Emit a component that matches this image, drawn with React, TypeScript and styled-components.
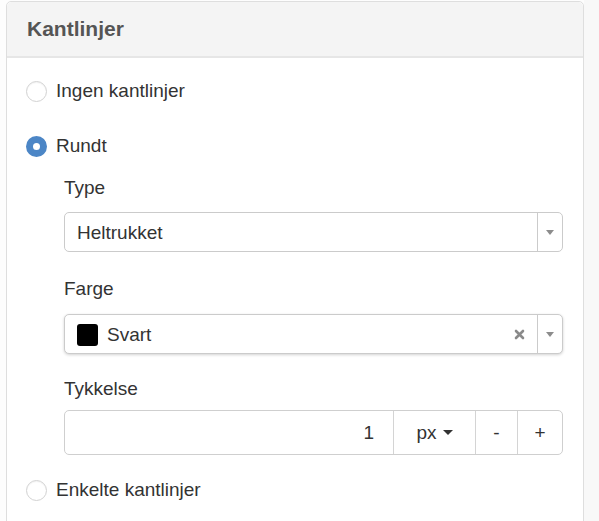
import React from "react";
import styled, { createGlobalStyle } from "styled-components";

const GlobalStyle = createGlobalStyle`
  html, body {
    margin: 0;
    padding: 0;
    background: #ffffff;
    font-family: "Liberation Sans", Arial, sans-serif;
    color: #333333;
  }
`;

const Page = styled.div`
  display: flex;
  height: 521px;
  overflow: hidden;
`;

const Column = styled.div`
  padding: 1px 0 0 6px;
  background: #fdfdfd;
`;

const Filler = styled.div`
  flex: 1;
  background: #f8f8f8;
`;

const Panel = styled.div`
  width: 576px;
  height: 560px;
  border: 1px solid #dedede;
  border-radius: 5px 5px 0 0;
  background: #ffffff;
`;

const PanelHeader = styled.div`
  height: 54px;
  display: flex;
  align-items: center;
  padding: 0 0 0 20px;
  background: #f4f4f4;
  border-bottom: 2px solid #e6e6e6;
  border-radius: 5px 5px 0 0;
`;

const Title = styled.h3`
  margin: 0;
  font-size: 21px;
  font-weight: 700;
  color: #555555;
`;

const PanelBody = styled.div`
  padding: 21px 20px 0 19px;
  display: flex;
  flex-direction: column;
`;

const RadioRow = styled.label<{ $top?: number }>`
  display: flex;
  align-items: center;
  gap: 9px;
  height: 24px;
  margin-top: ${(p) => p.$top ?? 0}px;
  font-size: 19px;
  line-height: 24px;
`;

const RadioDot = styled.span<{ $checked?: boolean }>`
  width: 21px;
  height: 21px;
  box-sizing: border-box;
  border-radius: 50%;
  flex-shrink: 0;
  background: #ffffff;
  border: ${(p) => (p.$checked ? "7px solid #4c86c6" : "1px solid #d2d2d2")};
  box-shadow: ${(p) => (p.$checked ? "none" : "inset 0 1px 1px rgba(0,0,0,0.05)")};
`;

const Nested = styled.div`
  padding-left: 38px;
  display: flex;
  flex-direction: column;
`;

const FieldLabel = styled.div<{ $top: number; $gap: number }>`
  font-size: 19px;
  line-height: 24px;
  margin-top: ${(p) => p.$top}px;
  margin-bottom: ${(p) => p.$gap}px;
`;

const Select = styled.div<{ $raised?: boolean }>`
  height: 40px;
  box-sizing: border-box;
  display: flex;
  align-items: stretch;
  border: 1px solid #cbcbcb;
  border-radius: 5px;
  background: #ffffff;
  box-shadow: ${(p) => (p.$raised ? "0 1px 3px rgba(0,0,0,0.18)" : "none")};
`;

const SelectValue = styled.div`
  flex: 1;
  display: flex;
  align-items: center;
  gap: 9px;
  padding: 2px 0 0 12px;
  font-size: 19px;
`;

const Swatch = styled.span`
  width: 21px;
  height: 22px;
  margin-top: -1px;
  border-radius: 3px;
  background: #000000;
`;

const Clear = styled.div`
  width: 36px;
  display: flex;
  align-items: center;
  justify-content: center;
  color: #8a8a8a;
`;

const ArrowZone = styled.div`
  width: 24px;
  border-left: 1px solid #cbcbcb;
  display: flex;
  align-items: center;
  justify-content: center;
`;

const Caret = styled.span<{ $size?: number; $color?: string }>`
  width: 0;
  height: 0;
  border-left: ${(p) => p.$size ?? 4}px solid transparent;
  border-right: ${(p) => p.$size ?? 4}px solid transparent;
  border-top: 5px solid ${(p) => p.$color ?? "#8c8c8c"};
`;

const Group = styled.div`
  height: 45px;
  margin-top: 1px;
  box-sizing: border-box;
  display: flex;
  border: 1px solid #cfcfcf;
  border-radius: 5px;
`;

const NumberInput = styled.div`
  flex: 1;
  display: flex;
  align-items: center;
  justify-content: flex-end;
  padding-right: 19px;
  font-size: 19px;
`;

const AddonButton = styled.div<{ $width: number }>`
  width: ${(p) => p.$width}px;
  border-left: 1px solid #d4d4d4;
  display: flex;
  align-items: center;
  justify-content: center;
  gap: 6px;
  font-size: 19px;
  color: #333333;
`;

function ClearIcon() {
  return (
    <svg width="11" height="11" viewBox="0 0 11 11">
      <path d="M2 2 L9 9 M9 2 L2 9" stroke="#8a8a8a" strokeWidth="2.6" strokeLinecap="round" />
    </svg>
  );
}

export default function App() {
  return (
    <Page>
      <GlobalStyle />
      <Column>
        <Panel>
          <PanelHeader>
            <Title>Kantlinjer</Title>
          </PanelHeader>
          <PanelBody>
            <RadioRow>
              <RadioDot />
              Ingen kantlinjer
            </RadioRow>
            <RadioRow $top={31}>
              <RadioDot $checked />
              Rundt
            </RadioRow>
            <Nested>
              <FieldLabel $top={18} $gap={12}>
                Type
              </FieldLabel>
              <Select>
                <SelectValue>Heltrukket</SelectValue>
                <ArrowZone>
                  <Caret />
                </ArrowZone>
              </Select>
              <FieldLabel $top={25} $gap={13}>
                Farge
              </FieldLabel>
              <Select $raised>
                <SelectValue>
                  <Swatch />
                  Svart
                </SelectValue>
                <Clear>
                  <ClearIcon />
                </Clear>
                <ArrowZone>
                  <Caret />
                </ArrowZone>
              </Select>
              <FieldLabel $top={23} $gap={8}>
                Tykkelse
              </FieldLabel>
              <Group>
                <NumberInput>1</NumberInput>
                <AddonButton $width={81}>
                  px
                  <Caret $size={5} $color="#333333" />
                </AddonButton>
                <AddonButton $width={41}>-</AddonButton>
                <AddonButton $width={44}>+</AddonButton>
              </Group>
            </Nested>
            <RadioRow $top={23}>
              <RadioDot />
              Enkelte kantlinjer
            </RadioRow>
          </PanelBody>
        </Panel>
      </Column>
      <Filler />
    </Page>
  );
}
